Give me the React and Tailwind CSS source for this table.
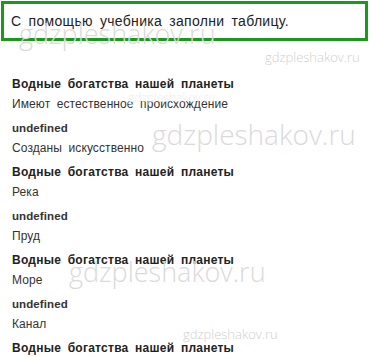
import React from "react";

const rows = [
  ["Водные богатства нашей планеты", "Имеют естественное происхождение"],
  ["undefined", "Созданы искусственно"],
  ["Водные богатства нашей планеты", "Река"],
  ["undefined", "Пруд"],
  ["Водные богатства нашей планеты", "Море"],
  ["undefined", "Канал"],
  ["Водные богатства нашей планеты", ""],
];

function Mark({ className }) {
  return (
    <div
      className={
        "pointer-events-none absolute whitespace-nowrap font-['Open_Sans',sans-serif] font-light " +
        className
      }
    >
      gdzpleshakov.ru
    </div>
  );
}

export default function App() {
  return (
    <div className="relative h-[357px] w-[370px] overflow-hidden bg-white font-['Liberation_Sans',Arial,sans-serif]">
      <div className="ml-[1px] mt-[1px] flex h-[40px] w-[367px] items-center border-[3px] border-[#1a9a1a] pl-[7px] text-[14px] tracking-[0.3px] text-[#222] [word-spacing:3px]">
        С помощью учебника заполни таблицу.
      </div>

      <div className="mt-[33px] flex flex-col gap-[4px] pl-[12px]">
        {rows.map(([head, value], i) => (
          <div key={i} className="flex flex-col">
            <div
              className={
                head === "undefined"
                  ? "h-[20px] text-[11.5px] font-bold leading-[20px] tracking-[0.1px] text-[#333]"
                  : "h-[20px] text-[12px] font-bold leading-[20px] tracking-[0.25px] text-[#222] [word-spacing:3px]"
              }
            >
              {head}
            </div>
            {value && (
              <div className="h-[20px] text-[12px] leading-[20px] tracking-[0.1px] text-[#333] [word-spacing:3px]">
                {value}
              </div>
            )}
          </div>
        ))}
      </div>

      <Mark className="left-[19px] top-[14px] text-[27px] text-[#dadada]" />
      <Mark className="left-[265px] top-[48px] text-[13px] text-[#cfcfcf]" />
      <Mark className="left-[128px] top-[89px] text-[12px] text-[#eeeeee]" />
      <Mark className="left-[152px] top-[113px] text-[28px] text-[#dadada]" />
      <Mark className="left-[69px] top-[252px] text-[27px] text-[#dadada]" />
      <Mark className="left-[183px] top-[325px] text-[13px] text-[#cfcfcf]" />
    </div>
  );
}
